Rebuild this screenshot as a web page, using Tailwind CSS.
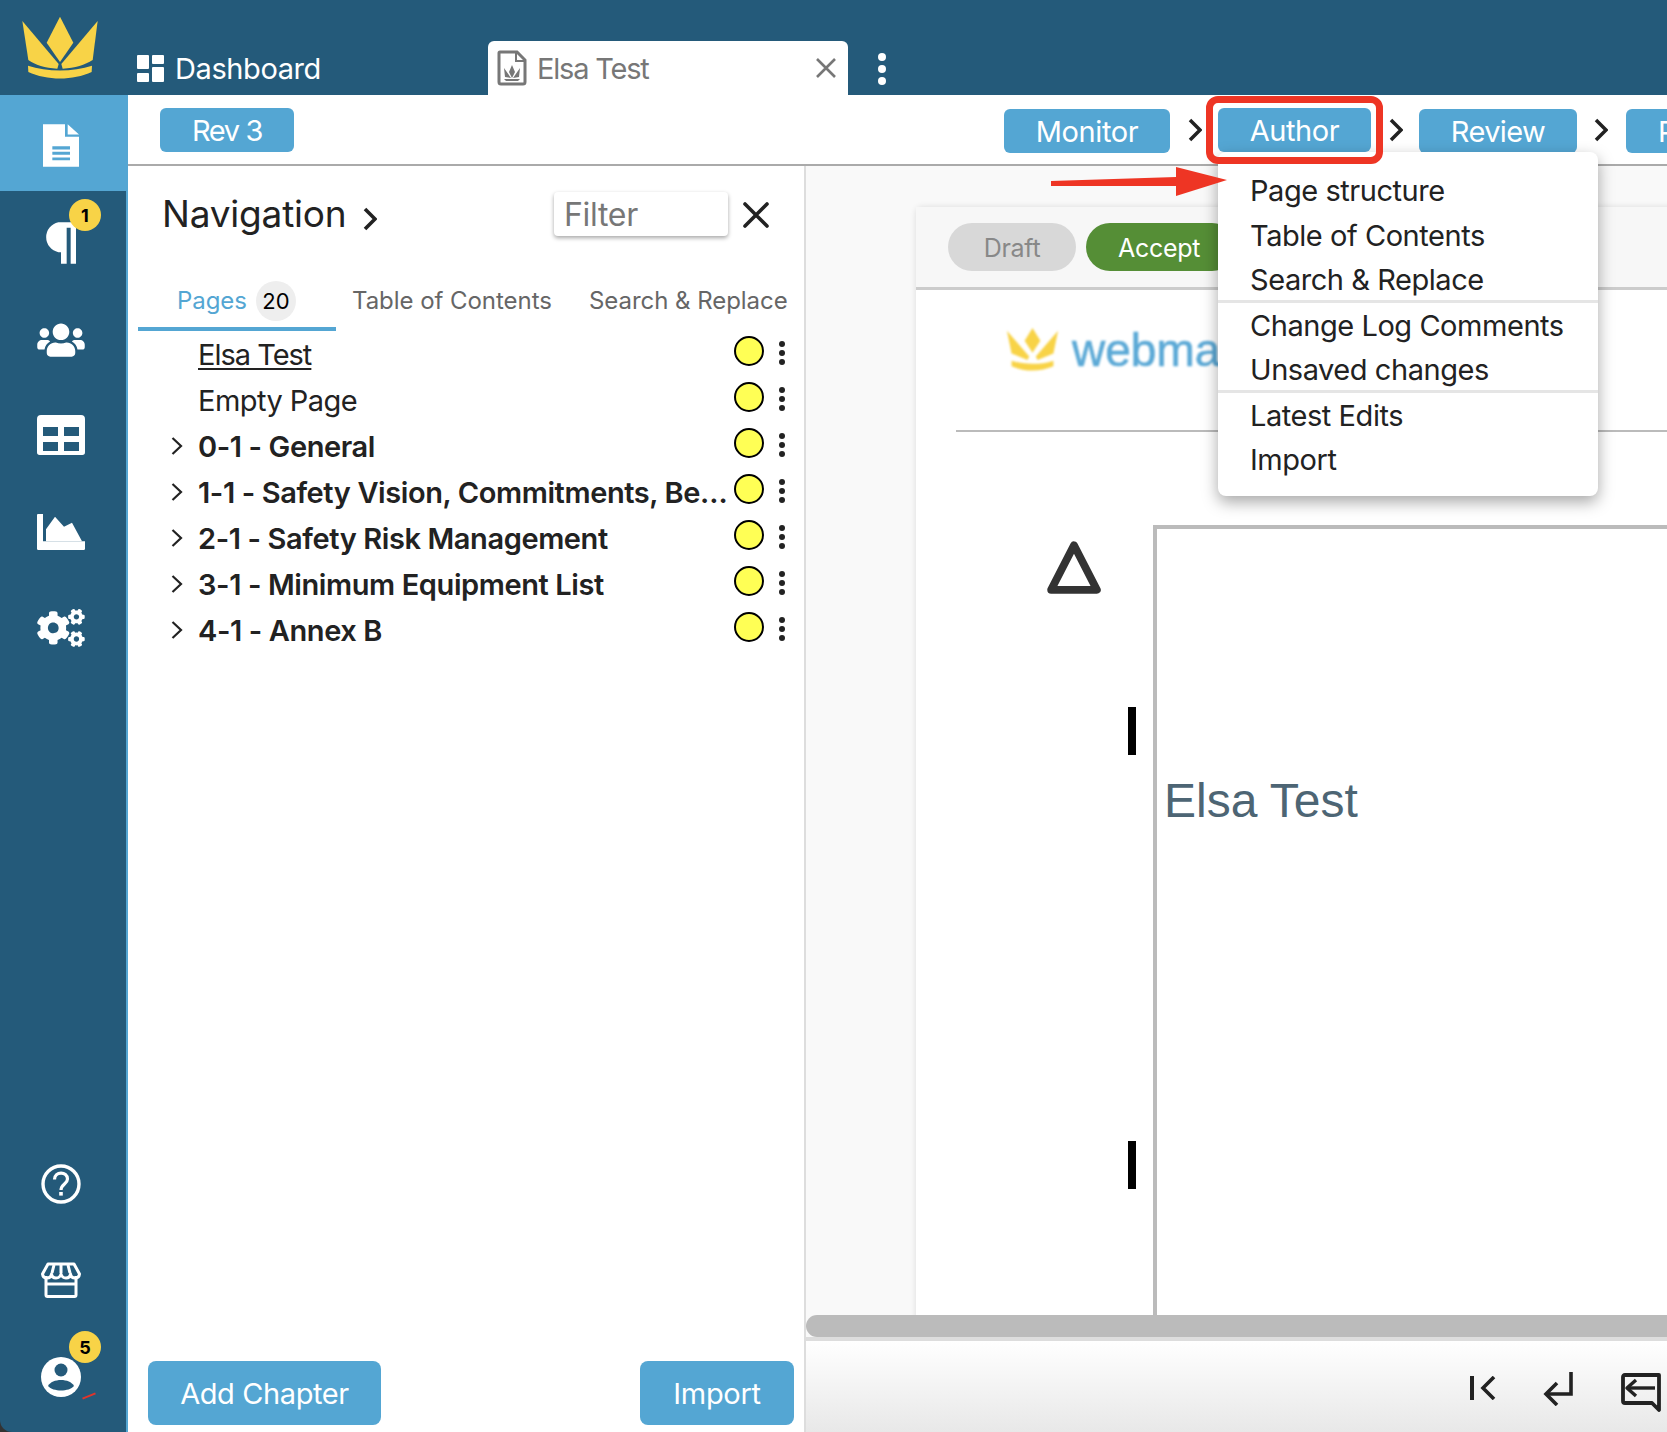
<!DOCTYPE html>
<html>
<head>
<meta charset="utf-8">
<script src="https://cdn.jsdelivr.net/npm/@tailwindcss/browser@4"></script>
</head>
<body class="bg-white">
<div class="relative w-[1667px] h-[1432px] overflow-hidden flex flex-col font-['Inter',sans-serif] text-[#222] bg-[#333]">
  <!-- header -->
  <header class="h-[95px] bg-[#245a7a] flex items-end shrink-0">
    <div class="w-[128px] h-[95px] shrink-0">
      <svg viewBox="0 0 384 285" class="w-[128px] h-[95px]" fill="#f8d347">
        <path d="M180 50L220 128L180 186L140 128Z"/>
        <path d="M67 63L176 192L172 206C135 204 105 195 85 180Z"/>
        <path d="M293 63L184 192L188 206C225 204 255 195 278 180Z"/>
        <path d="M84 197C140 216 220 216 276 197L275 216C220 242 140 242 85 216Z"/>
      </svg>
    </div>
    <div class="w-[360px] h-[54px] shrink-0 flex items-center pl-[9px] gap-[11px] text-white text-[29px] tracking-[-0.4px]">
      <svg viewBox="0 0 27 27" class="w-[27px] h-[27px]" fill="#fff"><rect width="12" height="14" rx="1"/><rect x="15" width="12" height="9" rx="1"/><rect y="18" width="12" height="9" rx="1"/><rect x="15" y="12" width="12" height="15" rx="1"/></svg>
      <span class="pt-[2px]">Dashboard</span>
    </div>
    <div class="w-[360px] h-[54px] shrink-0 bg-white rounded-t-[6px] flex items-center pl-[9px] pr-[12px] text-[#777] text-[29px] tracking-[-1.2px]">
      <svg viewBox="0 0 30 36" class="w-[30px] h-[36px] shrink-0" fill="none"><path d="M3 2H20L28 10V32Q28 34 26 34H4Q2 34 2 32V3Q2 2 3 2Z" stroke="#777" stroke-width="3"/><path d="M19 3V11H27" stroke="#777" stroke-width="2"/><path d="M15 15L18 22L15 28L12 22ZM7 18L14 28L8 27ZM23 18L16 28L22 27ZM7 29H23L21 31H9Z" fill="#777"/></svg>
      <span class="ml-[10px] flex-1 pt-[2px]">Elsa Test</span>
      <svg viewBox="0 0 20 20" class="w-[20px] h-[20px]" stroke="#777" stroke-width="2.6" fill="none"><path d="M1 1L19 19M19 1L1 19"/></svg>
    </div>
    <div class="h-[54px] w-[30px] ml-[19px] pt-[2px] shrink-0 flex flex-col items-center justify-center gap-[4px]">
      <span class="w-[8px] h-[8px] rounded-full bg-white"></span>
      <span class="w-[8px] h-[8px] rounded-full bg-white"></span>
      <span class="w-[8px] h-[8px] rounded-full bg-white"></span>
    </div>
  </header>

  <div class="flex flex-1 min-h-0">
    <!-- sidebar -->
    <aside class="w-[128px] shrink-0 bg-[#245a7a] border-r-2 border-[#54a6d3] rounded-bl-[12px] flex flex-col relative">
      <div class="w-[128px] h-[96px] pt-[5px] bg-[#54a6d3] flex items-center justify-center shrink-0 pr-[6px]">
        <svg viewBox="0 0 108 128" class="w-[36px] h-[43px]"><path d="M0 0H66V38H108V128H0Z" fill="#fff"/><path d="M74 0L108 31H74Z" fill="#fff"/><path d="M28 66H81V76H28ZM28 83H81V92H28ZM28 100H81V108H28Z" fill="#54a6d3"/></svg>
      </div>
      <div class="relative h-[100px] flex items-center justify-center">
        <svg viewBox="0 0 99 125" class="w-[33px] h-[42px] mt-[4px] mr-[8px]" fill="#fff"><path d="M99 0H46A46 46 0 0 0 46 90H54V125H71V17H83V125H99Z"/></svg>
        <span class="absolute left-[69px] top-[8px] w-[32px] h-[32px] rounded-full bg-[#f8d347] text-black text-[18px] font-bold flex items-center justify-center">1</span>
      </div>
      <div class="h-[96px] pt-[2px] flex items-center justify-center pr-[4px]">
        <svg viewBox="0 0 640 512" class="w-[48px] h-[38px]" fill="#fff"><path d="M96 224c35.3 0 64-28.7 64-64s-28.7-64-64-64-64 28.7-64 64 28.7 64 64 64zm448 0c35.3 0 64-28.7 64-64s-28.7-64-64-64-64 28.7-64 64 28.7 64 64 64zm32 32h-64c-17.6 0-33.5 7.1-45.1 18.6 40.3 22.1 68.9 62 75.1 109.4h66c17.7 0 32-14.3 32-32v-32c0-35.3-28.7-64-64-64zm-256 0c61.9 0 112-50.1 112-112S381.9 32 320 32 208 82.1 208 144s50.1 112 112 112zm76.8 32h-8.3c-20.8 10-43.9 16-68.5 16s-47.6-6-68.5-16h-8.3C179.6 288 128 339.6 128 403.2V432c0 26.5 21.5 48 48 48h288c26.5 0 48-21.5 48-48v-28.8c0-63.6-51.6-115.2-115.2-115.2zm-223.7-13.4C161.5 263.1 145.6 256 128 256H64c-35.3 0-64 28.7-64 64v32c0 17.7 14.3 32 32 32h65.9c6.3-47.4 34.9-87.3 75.2-109.4z"/></svg>
      </div>
      <div class="h-[96px] flex items-center justify-center pr-[4px]">
        <svg viewBox="0 0 144 120" class="w-[48px] h-[40px]" fill="#fff" fill-rule="evenodd"><path d="M12 0H132Q144 0 144 12V112Q144 120 136 120H8Q0 120 0 112V12Q0 0 12 0ZM18 36V63H63V36ZM81 36V63H126V36ZM18 81V108H63V81ZM81 81V108H126V81Z"/></svg>
      </div>
      <div class="h-[96px] pt-[2px] flex items-center justify-center pr-[4px]">
        <svg viewBox="0 0 144 108" class="w-[48px] h-[36px]" fill="#fff"><path d="M0 3Q0 0 3 0H18V82H144V104Q144 108 140 108H4Q0 108 0 104Z"/><path d="M27 82V46L54 8L81 38L105 26L135 82Z"/></svg>
      </div>
      <div class="h-[96px] pt-[2px] flex items-center justify-center pr-[4px]">
        <svg viewBox="0 0 640 512" class="w-[48px] h-[38px]" fill="#fff"><path d="M512.1 191l-8.2 14.3c-3 5.3-9.4 7.5-15.1 5.4-11.8-4.4-22.6-10.7-32.1-18.6-4.6-3.8-5.8-10.5-2.8-15.7l8.2-14.3c-6.9-8-12.3-17.3-15.9-27.4h-16.5c-6 0-11.2-4.3-12.2-10.3-2-12-2.1-24.6 0-37.1 1-6 6.2-10.4 12.2-10.4h16.5c3.6-10.1 9-19.4 15.9-27.4l-8.2-14.3c-3-5.2-1.9-11.9 2.8-15.7 9.5-7.9 20.4-14.2 32.1-18.6 5.7-2.1 12.1.1 15.1 5.4l8.2 14.3c10.5-1.9 21.2-1.9 31.7 0L552 6.3c3-5.3 9.4-7.5 15.1-5.4 11.8 4.4 22.6 10.7 32.1 18.6 4.6 3.8 5.8 10.5 2.8 15.7l-8.2 14.3c6.9 8 12.3 17.3 15.9 27.4h16.5c6 0 11.2 4.3 12.2 10.3 2 12 2.1 24.6 0 37.1-1 6-6.2 10.4-12.2 10.4h-16.5c-3.6 10.1-9 19.4-15.9 27.4l8.2 14.3c3 5.2 1.9 11.9-2.8 15.7-9.5 7.9-20.4 14.2-32.1 18.6-5.7 2.1-12.1-.1-15.1-5.4l-8.2-14.3c-10.4 1.9-21.2 1.9-31.7 0zm-10.5-58.8c38.5 29.6 82.4-14.3 52.8-52.8-38.5-29.7-82.4 14.3-52.8 52.8zM386.3 286.1l33.7 16.8c10.1 5.8 14.5 18.1 10.5 29.1-8.9 24.2-26.4 46.4-42.6 65.8-7.4 8.9-20.2 11.1-30.3 5.3l-29.1-16.8c-16 13.7-34.6 24.6-54.9 31.7v33.6c0 11.6-8.3 21.6-19.7 23.6-24.6 4.2-50.4 4.4-75.9 0-11.5-2-20-11.9-20-23.6V418c-20.3-7.2-38.9-18-54.9-31.7L74 403c-10 5.8-22.9 3.6-30.3-5.3-16.2-19.4-33.3-41.6-42.2-65.7-4-10.9.4-23.2 10.5-29.1l33.3-16.8c-3.9-20.9-3.9-42.4 0-63.4L12 205.8c-10.1-5.8-14.6-18.1-10.5-29 8.9-24.2 26-46.4 42.2-65.8 7.4-8.9 20.2-11.1 30.3-5.3l29.1 16.8c16-13.7 34.6-24.6 54.9-31.7V57.1c0-11.5 8.2-21.5 19.6-23.5 24.6-4.2 50.5-4.4 76-.1 11.5 2 20 11.9 20 23.6v33.6c20.3 7.2 38.9 18 54.9 31.7l29.1-16.8c10-5.8 22.9-3.6 30.3 5.3 16.2 19.4 33.2 41.6 42.1 65.8 4 10.9.1 23.2-10 29.1l-33.7 16.8c3.9 21 3.9 42.5 0 63.5zm-117.6 21.1c59.2-77-28.7-164.9-105.7-105.7-59.2 77 28.7 164.9 105.7 105.7zm243.4 182.7l-8.2 14.3c-3 5.3-9.4 7.5-15.1 5.4-11.8-4.4-22.6-10.7-32.1-18.6-4.6-3.8-5.8-10.5-2.8-15.7l8.2-14.3c-6.9-8-12.3-17.3-15.9-27.4h-16.5c-6 0-11.2-4.3-12.2-10.3-2-12-2.1-24.6 0-37.1 1-6 6.2-10.4 12.2-10.4h16.5c3.6-10.1 9-19.4 15.9-27.4l-8.2-14.3c-3-5.2-1.9-11.9 2.8-15.7 9.5-7.9 20.4-14.2 32.1-18.6 5.7-2.1 12.1.1 15.1 5.4l8.2 14.3c10.5-1.9 21.2-1.9 31.7 0l8.2-14.3c3-5.3 9.4-7.5 15.1-5.4 11.8 4.4 22.6 10.7 32.1 18.6 4.6 3.8 5.8 10.5 2.8 15.7l-8.2 14.3c6.9 8 12.3 17.3 15.9 27.4h16.5c6 0 11.2 4.3 12.2 10.3 2 12 2.1 24.6 0 37.1-1 6-6.2 10.4-12.2 10.4h-16.5c-3.6 10.1-9 19.4-15.9 27.4l8.2 14.3c3 5.2 1.9 11.9-2.8 15.7-9.5 7.9-20.4 14.2-32.1 18.6-5.7 2.1-12.1-.1-15.1-5.4l-8.2-14.3c-10.4 1.9-21.2 1.9-31.7 0zM501.6 431c38.5 29.6 82.4-14.3 52.8-52.8-38.5-29.6-82.4 14.3-52.8 52.8z"/></svg>
      </div>
      <div class="mt-auto h-[96px] flex items-center justify-center pr-[4px]">
        <svg viewBox="0 0 40 40" class="w-[40px] h-[40px]" fill="none" stroke="#fff" stroke-width="3.4"><circle cx="20" cy="20" r="18"/><path d="M13.5 15.5C13.5 7 26.5 7 26.5 15C26.5 20 20 20 20 26" stroke-width="3.2"/><rect x="18.2" y="28" width="3.6" height="3.6" fill="#fff" stroke="none"/></svg>
      </div>
      <div class="h-[96px] mb-[17px] flex items-center justify-center pr-[4px]">
        <svg viewBox="0 0 40 36" class="w-[40px] h-[36px]" fill="none" stroke="#fff" stroke-width="3" stroke-linejoin="round"><path d="M5 14V33Q5 34.5 6.500 34.500H33.500Q35 34.500 35 33V14"/><path d="M5 22H35" /><path d="M7 2H33L38.500 12Q38 16 34 16Q30 16 29.500 12Q29 16 25 16Q21 16 20 12Q19 16 15 16Q11 16 10.500 12Q10 16 6 16Q2 16 1.500 12Z"/><path d="M13 3L11 11M20 3V11M27 3L29 11" /></svg>
      </div>
      <div class="relative h-[87px] flex items-start justify-center pr-[4px]">
        <svg viewBox="0 0 40 40" class="w-[40px] h-[40px] mt-[12px]"><circle cx="20" cy="20" r="20" fill="#fff"/><circle cx="20" cy="13" r="6.500" fill="#245a7a"/><path d="M7 29C11 21 29 21 33 29C28 35 12 35 7 29Z" fill="#245a7a"/></svg>
        <span class="absolute left-[69px] top-[-14px] w-[32px] h-[32px] rounded-full bg-[#f8d347] text-black text-[18px] font-bold flex items-center justify-center">5</span>
        <span class="absolute left-[82px] top-[50px] w-[14px] h-[2px] bg-[#e2342a] -rotate-[22deg]"></span>
      </div>
    </aside>

    <!-- content -->
    <div class="flex-1 min-w-0 flex flex-col bg-white">
      <div class="h-[71px] shrink-0 border-b-2 border-[#aaa] flex items-start pt-[13px] pl-[32px] relative">
        <button class="w-[134px] h-[44px] pt-[1px] shrink-0 bg-[#54a6d3] rounded-[6px] text-white text-[29px] tracking-[-1.4px]">Rev 3</button>
        <div class="ml-[710px] flex items-center h-[44px] shrink-0">
          <button class="w-[166px] h-[44px] pt-[1px] shrink-0 mt-[2px] bg-[#54a6d3] rounded-[6px] text-white text-[29px] tracking-[-0.4px]">Monitor</button>
          <svg viewBox="0 0 14 24" class="w-[14px] h-[24px] shrink-0 ml-[18px]" fill="none" stroke="#222" stroke-width="3.500"><path d="M2 2L12 12L2 22"/></svg>
          <button class="w-[153px] h-[44px] pt-[1px] shrink-0 ml-[16px] bg-[#54a6d3] rounded-[6px] text-white text-[29px] tracking-[-0.4px]">Author</button>
          <svg viewBox="0 0 14 24" class="w-[14px] h-[24px] shrink-0 ml-[18px]" fill="none" stroke="#222" stroke-width="3.500"><path d="M2 2L12 12L2 22"/></svg>
          <button class="w-[158px] h-[44px] pt-[1px] shrink-0 mt-[2px] ml-[16px] bg-[#54a6d3] rounded-[6px] text-white text-[29px] tracking-[-0.6px]">Review</button>
          <svg viewBox="0 0 14 24" class="w-[14px] h-[24px] shrink-0 ml-[17px]" fill="none" stroke="#222" stroke-width="3.500"><path d="M2 2L12 12L2 22"/></svg>
          <button class="w-[60px] h-[44px] pt-[1px] shrink-0 mt-[2px] ml-[18px] bg-[#54a6d3] rounded-[6px] text-white text-[29px] text-left pl-[32px] overflow-hidden">P</button>
        </div>
      </div>

      <div class="flex flex-1 min-h-0">
        <!-- nav -->
        <div class="w-[678px] shrink-0 border-r-2 border-[#ddd] flex flex-col relative">
          <div class="h-[87px] mt-[26px] flex items-start pl-[34px] shrink-0">
            <span class="text-[37px] leading-[44px] tracking-[-0.2px] w-[186px] shrink-0">Navigation</span>
            <svg viewBox="0 0 14 24" class="w-[14px] h-[24px] shrink-0 mt-[15px] ml-[15px]" fill="none" stroke="#222" stroke-width="3.600"><path d="M2 2L12 12L2 22"/></svg>
            <div class="ml-[177px] w-[174px] h-[44px] shrink-0 rounded-[4px] bg-white shadow-[0_2px_4px_rgba(0,0,0,0.35)] text-[#777] text-[32px] leading-[46px] pl-[10px] tracking-[-0.3px]">Filter</div>
            <svg viewBox="0 0 26 26" class="w-[26px] h-[26px] shrink-0 ml-[15px] mt-[10px]" fill="none" stroke="#222" stroke-width="3.600" stroke-linecap="round"><path d="M2 2L24 24M24 2L2 24"/></svg>
          </div>
          <div class="h-[48px] flex ml-[10px] text-[24px] tracking-[-0.05px] text-[#666] shrink-0">
            <div class="w-[198px] h-[52px] shrink-0 border-b-4 border-[#54a6d3] flex items-start pl-[39px] pt-[2px] gap-[9px]">
              <span class="text-[#54a6d3] leading-[40px]">Pages</span>
              <span class="w-[40px] h-[40px] shrink-0 rounded-full bg-[#eee] text-black text-[22px] flex items-center justify-center">20</span>
            </div>
            <span class="ml-[16px] leading-[40px] pt-[2px] w-[237px] shrink-0">Table of Contents</span>
            <span class="leading-[40px] pt-[2px] whitespace-nowrap">Search &amp; Replace</span>
          </div>
          <ul class="mt-[4px] text-[29px] tracking-[-0.55px] flex flex-col">
            <li class="h-[46px] flex items-center pl-[70px] pr-[19px]"><span class="underline underline-offset-[3px] decoration-2 flex-1 min-w-0 pt-[2px] tracking-[-1px]">Elsa Test</span><span class="w-[30px] h-[30px] -mt-[6px] rounded-full bg-[#ffff55] border-2 border-black shrink-0"></span><span class="ml-[15px] flex flex-col gap-[3px] -mt-[2px]"><i class="w-[6px] h-[6px] rounded-full bg-[#222]"></i><i class="w-[6px] h-[6px] rounded-full bg-[#222]"></i><i class="w-[6px] h-[6px] rounded-full bg-[#222]"></i></span></li>
            <li class="h-[46px] flex items-center pl-[70px] pr-[19px]"><span class="flex-1 min-w-0 pt-[2px]">Empty Page</span><span class="w-[30px] h-[30px] -mt-[6px] rounded-full bg-[#ffff55] border-2 border-black shrink-0"></span><span class="ml-[15px] flex flex-col gap-[3px] -mt-[2px]"><i class="w-[6px] h-[6px] rounded-full bg-[#222]"></i><i class="w-[6px] h-[6px] rounded-full bg-[#222]"></i><i class="w-[6px] h-[6px] rounded-full bg-[#222]"></i></span></li>
            <li class="h-[46px] flex items-center pl-[43px] pr-[19px] font-semibold tracking-[-0.4px]"><svg viewBox="0 0 12 20" class="w-[12px] h-[20px] mr-[15px] shrink-0" fill="none" stroke="#222" stroke-width="2.200"><path d="M1.500 2L10 10L1.500 18"/></svg><span class="flex-1 min-w-0 pt-[2px]">0-1 - General</span><span class="w-[30px] h-[30px] -mt-[6px] rounded-full bg-[#ffff55] border-2 border-black shrink-0"></span><span class="ml-[15px] flex flex-col gap-[3px] -mt-[2px]"><i class="w-[6px] h-[6px] rounded-full bg-[#222]"></i><i class="w-[6px] h-[6px] rounded-full bg-[#222]"></i><i class="w-[6px] h-[6px] rounded-full bg-[#222]"></i></span></li>
            <li class="h-[46px] flex items-center pl-[43px] pr-[19px] font-semibold tracking-[-0.4px]"><svg viewBox="0 0 12 20" class="w-[12px] h-[20px] mr-[15px] shrink-0" fill="none" stroke="#222" stroke-width="2.200"><path d="M1.500 2L10 10L1.500 18"/></svg><span class="flex-1 min-w-0 pt-[2px] whitespace-nowrap">1-1 - Safety Vision, Commitments, Be…</span><span class="w-[30px] h-[30px] -mt-[6px] rounded-full bg-[#ffff55] border-2 border-black shrink-0"></span><span class="ml-[15px] flex flex-col gap-[3px] -mt-[2px]"><i class="w-[6px] h-[6px] rounded-full bg-[#222]"></i><i class="w-[6px] h-[6px] rounded-full bg-[#222]"></i><i class="w-[6px] h-[6px] rounded-full bg-[#222]"></i></span></li>
            <li class="h-[46px] flex items-center pl-[43px] pr-[19px] font-semibold tracking-[-0.4px]"><svg viewBox="0 0 12 20" class="w-[12px] h-[20px] mr-[15px] shrink-0" fill="none" stroke="#222" stroke-width="2.200"><path d="M1.500 2L10 10L1.500 18"/></svg><span class="flex-1 min-w-0 pt-[2px]">2-1 - Safety Risk Management</span><span class="w-[30px] h-[30px] -mt-[6px] rounded-full bg-[#ffff55] border-2 border-black shrink-0"></span><span class="ml-[15px] flex flex-col gap-[3px] -mt-[2px]"><i class="w-[6px] h-[6px] rounded-full bg-[#222]"></i><i class="w-[6px] h-[6px] rounded-full bg-[#222]"></i><i class="w-[6px] h-[6px] rounded-full bg-[#222]"></i></span></li>
            <li class="h-[46px] flex items-center pl-[43px] pr-[19px] font-semibold tracking-[-0.4px]"><svg viewBox="0 0 12 20" class="w-[12px] h-[20px] mr-[15px] shrink-0" fill="none" stroke="#222" stroke-width="2.200"><path d="M1.500 2L10 10L1.500 18"/></svg><span class="flex-1 min-w-0 pt-[2px]">3-1 - Minimum Equipment List</span><span class="w-[30px] h-[30px] -mt-[6px] rounded-full bg-[#ffff55] border-2 border-black shrink-0"></span><span class="ml-[15px] flex flex-col gap-[3px] -mt-[2px]"><i class="w-[6px] h-[6px] rounded-full bg-[#222]"></i><i class="w-[6px] h-[6px] rounded-full bg-[#222]"></i><i class="w-[6px] h-[6px] rounded-full bg-[#222]"></i></span></li>
            <li class="h-[46px] flex items-center pl-[43px] pr-[19px] font-semibold tracking-[-0.4px]"><svg viewBox="0 0 12 20" class="w-[12px] h-[20px] mr-[15px] shrink-0" fill="none" stroke="#222" stroke-width="2.200"><path d="M1.500 2L10 10L1.500 18"/></svg><span class="flex-1 min-w-0 pt-[2px]">4-1 - Annex B</span><span class="w-[30px] h-[30px] -mt-[6px] rounded-full bg-[#ffff55] border-2 border-black shrink-0"></span><span class="ml-[15px] flex flex-col gap-[3px] -mt-[2px]"><i class="w-[6px] h-[6px] rounded-full bg-[#222]"></i><i class="w-[6px] h-[6px] rounded-full bg-[#222]"></i><i class="w-[6px] h-[6px] rounded-full bg-[#222]"></i></span></li>
          </ul>
          <div class="mt-auto mb-[7px] pl-[20px] pr-[10px] flex justify-between">
            <button class="w-[233px] h-[64px] pt-[2px] rounded-[8px] bg-[#54a6d3] text-white text-[29px] tracking-[-0.4px]">Add Chapter</button>
            <button class="w-[154px] h-[64px] pt-[2px] rounded-[8px] bg-[#54a6d3] text-white text-[29px] tracking-[-0.3px]">Import</button>
          </div>
        </div>

        <!-- document area -->
        <div class="flex-1 min-w-0 bg-[#f9f9f9] flex flex-col">
          <div class="flex-1 min-h-0 pt-[41px] pl-[110px] overflow-hidden">
            <div class="w-[900px] h-[1200px] bg-white rounded-t-[6px] shadow-[0_0_6px_rgba(0,0,0,0.12)]">
              <div class="h-[83px] bg-[#f7f7f7] border-b-[3px] border-[#ccc] flex items-start pt-[16px] pl-[32px] gap-[10px]">
                <span class="w-[128px] h-[48px] pt-[4px] rounded-full bg-[#d8d8d8] text-[#888] text-[25px] tracking-[-0.3px] flex items-center justify-center">Draft</span>
                <span class="w-[150px] h-[48px] pt-[4px] rounded-full bg-[#558e36] text-white text-[25px] tracking-[-0.3px] flex items-center justify-start pl-[32px]">Accept</span>
              </div>
              <div class="h-[142px] ml-[40px] border-b-2 border-[#bbb] flex items-start pt-[38px] pl-[50px]">
                <svg viewBox="0 0 114 124" preserveAspectRatio="none" class="w-[53px] h-[44px] shrink-0 blur-[0.8px]" fill="#f8d347"><path d="M57 0L74 36L57 70L40 36Z"/><path d="M2 8L50 80L46 90L12 72Z"/><path d="M112 8L64 80L68 90L102 72Z"/><path d="M12 92C40 104 74 104 102 92L102 108C74 124 40 124 12 108Z"/></svg>
                <span class="ml-[13px] text-[#5ba9d6] font-['Liberation_Sans',sans-serif] text-[46px] leading-[44px] [-webkit-text-stroke:0.6px_#5ba9d6] blur-[0.8px]">webma</span>
              </div>
              <div class="flex">
                <div class="w-[237px] shrink-0 relative">
                  <svg viewBox="0 0 52 52" class="absolute left-[131px] top-[108px] w-[54px] h-[54px]" fill="none" stroke="#333" stroke-width="7.500" stroke-linejoin="round"><path d="M26 5L48 48H4Z"/></svg>
                  <span class="absolute left-[212px] top-[275px] w-[8px] h-[48px] bg-black"></span>
                  <span class="absolute left-[212px] top-[709px] w-[8px] h-[48px] bg-black"></span>
                </div>
                <div class="flex-1 h-[900px] mt-[93px] border-l-4 border-t-4 border-[#bbb] bg-white pl-[7px] pt-[242px] font-['Liberation_Sans',sans-serif] text-[48px] leading-[60px] text-[#4d6574]">Elsa Test</div>
              </div>
            </div>
          </div>
          <div class="h-[22px] bg-[#bbb] rounded-l-full shrink-0"></div>
          <div class="h-[4px] bg-[#ddd] shrink-0"></div>
          <div class="h-[91px] shrink-0 bg-gradient-to-b from-white to-[#e8e8e8] flex items-start justify-end pr-[6px] pt-[31px] gap-[49px]">
            <svg viewBox="0 0 26 24" class="w-[26px] h-[24px] mt-[4px]" fill="none" stroke="#222" stroke-width="4"><path d="M2 0V24"/><path d="M24 1L13 12L24 23" stroke-width="3.600"/></svg>
            <svg viewBox="0 0 30 34" class="w-[30px] h-[34px] -ml-[2px]" fill="none" stroke="#222" stroke-width="3.600"><path d="M28 0V22H3"/><path d="M14 11L3 22L14 33"/></svg>
            <svg viewBox="0 0 40 40" class="w-[40px] h-[40px] -ml-[1px]" fill="none" stroke="#222" stroke-width="3.800" stroke-linejoin="round"><path d="M4 3Q2 3 2 5V29Q2 31 4 31H31L38 38V3Z"/><path d="M34 16H7" stroke-width="3.400"/><path d="M15 8L6 16L15 24" stroke-width="3.400"/></svg>
          </div>
        </div>
      </div>
    </div>
  </div>

  <!-- annotation: menu and red markers -->
  <div class="absolute left-[1218px] top-[152px] w-[380px] h-[344px] bg-white rounded-[8px] shadow-[0_6px_16px_rgba(0,0,0,0.35)] pt-[17px] text-[29px] tracking-[-0.45px]">
    <div class="px-[32px] h-[44.5px] leading-[44px]">Page structure</div>
    <div class="px-[32px] h-[44.5px] leading-[44px]">Table of Contents</div>
    <div class="px-[32px] h-[44.5px] leading-[44px]">Search &amp; Replace</div>
    <div class="h-[3px] -mt-[3px] mb-[1px] bg-[#e5e5e5]"></div>
    <div class="px-[32px] h-[44.5px] leading-[44px]">Change Log Comments</div>
    <div class="px-[32px] h-[44.5px] leading-[44px]">Unsaved changes</div>
    <div class="h-[3px] -mt-[3px] mb-[1px] bg-[#e5e5e5]"></div>
    <div class="px-[32px] h-[44.5px] leading-[44px]">Latest Edits</div>
    <div class="px-[32px] h-[44.5px] leading-[44px]">Import</div>
  </div>
  <div class="absolute left-[1206px] top-[96px] w-[177px] h-[68px] rounded-[12px] border-[7px] border-[#ee3524]"></div>
  <svg viewBox="0 0 180 32" class="absolute left-[1049px] top-[166px] w-[180px] h-[32px]" fill="#ee3524"><path d="M2 15L127 11V1L178 14L127 30V20L2 20Z"/></svg>
</div>
</body>
</html>
